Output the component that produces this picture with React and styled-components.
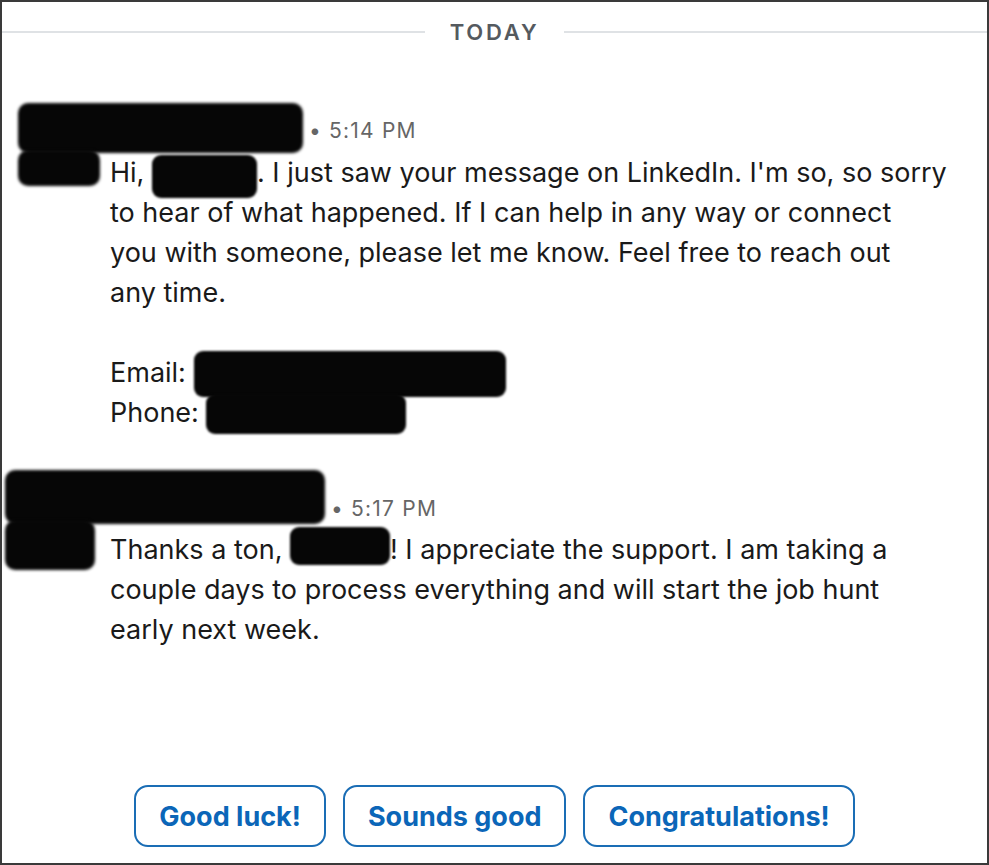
import React from 'react'
import styled, { createGlobalStyle } from 'styled-components'

const GlobalStyle = createGlobalStyle`
  html, body { margin: 0; padding: 0; background: #fff; }
  body { font-family: Inter, "Noto Sans", sans-serif; }
`

const Frame = styled.div`
  width: 989px;
  height: 865px;
  box-sizing: border-box;
  border: 2px solid #3a3a3a;
  background: #fff;
  display: flex;
  flex-direction: column;
  overflow: hidden;
`

const Divider = styled.div`
  display: flex;
  align-items: center;
  gap: 25px;
  height: 30px;
  margin-top: 15px;
`

const Rule = styled.div`
  flex: 1;
  height: 2px;
  background: #dfe2e5;
`

const DayLabel = styled.span`
  font-size: 22px;
  font-weight: 600;
  letter-spacing: 2.8px;
  color: #555a5f;
`

const MessageList = styled.div`
  display: flex;
  flex-direction: column;
  gap: 37px;
  padding-top: 56px;
`

const Message = styled.div`
  display: grid;
  grid-template-columns: 108px 1fr;
`

const Header = styled.div`
  grid-column: 1 / 3;
  display: flex;
  align-items: flex-start;
  height: ${(p) => p.$h}px;
`

// the black marker strokes that hide names, avatars and contact details
const Blob = styled.div`
  background: #060606;
  border-radius: 10px;
  filter: blur(1.4px);
  width: ${(p) => p.$w}px;
  height: ${(p) => p.$h}px;
  margin-left: ${(p) => p.$left || 0}px;
  margin-top: ${(p) => p.$top || 0}px;
`

const Time = styled.span`
  font-size: 21px;
  line-height: 22px;
  letter-spacing: 1.2px;
  color: #666;
  margin-left: 6px;
  margin-top: ${(p) => p.$top}px;
  white-space: nowrap;
`

const Body = styled.div`
  font-size: 27px;
  line-height: 40px;
  color: #1a1a1a;
  white-space: nowrap;
`

const InlineBlob = styled.span`
  display: inline-block;
  vertical-align: top;
  background: #060606;
  border-radius: 9px;
  filter: blur(1.3px);
  width: ${(p) => p.$w}px;
  height: ${(p) => p.$h}px;
  margin-top: ${(p) => p.$top}px;
  margin-bottom: ${(p) => 40 - p.$h - p.$top}px;
`

const Replies = styled.div`
  margin-top: auto;
  display: flex;
  justify-content: center;
  gap: 17px;
  padding-bottom: 16px;
`

const ReplyButton = styled.button`
  height: 62px;
  padding: 0 23px;
  background: #fff;
  border: 2px solid #1a6db5;
  border-radius: 14px;
  font-family: Inter, "Noto Sans", sans-serif;
  font-size: 27px;
  font-weight: 700;
  color: #0b66b8;
  cursor: pointer;
`

export default function App() {
  return (
    <>
      <GlobalStyle />
      <Frame>
        <Divider>
          <Rule />
          <DayLabel>TODAY</DayLabel>
          <Rule />
        </Divider>

        <MessageList>
          <Message>
            <Header $h={50}>
              <Blob $w={285} $h={50} $left={16} />
              <Time $top={17}>• 5:14 PM</Time>
            </Header>
            <Blob $w={82} $h={36} $left={16} $top={-3} />
            <Body>
              Hi, <InlineBlob $w={105} $h={43} $top={2} />. I just saw your message on LinkedIn. I'm so, so sorry
              <br />
              to hear of what happened. If I can help in any way or connect
              <br />
              you with someone, please let me know. Feel free to reach out
              <br />
              any time.
              <br />
              <br />
              Email: <InlineBlob $w={312} $h={46} $top={-2} />
              <br />
              Phone: <InlineBlob $w={200} $h={40} $top={1} />
            </Body>
          </Message>

          <Message>
            <Header $h={60}>
              <Blob $w={320} $h={54} $left={3} />
              <Time $top={28}>• 5:17 PM</Time>
            </Header>
            <Blob $w={90} $h={50} $left={3} $top={-10} />
            <Body>
              Thanks a ton, <InlineBlob $w={100} $h={38} $top={-3} />! I appreciate the support. I am taking a
              <br />
              couple days to process everything and will start the job hunt
              <br />
              early next week.
            </Body>
          </Message>
        </MessageList>

        <Replies>
          <ReplyButton>Good luck!</ReplyButton>
          <ReplyButton>Sounds good</ReplyButton>
          <ReplyButton>Congratulations!</ReplyButton>
        </Replies>
      </Frame>
    </>
  )
}
